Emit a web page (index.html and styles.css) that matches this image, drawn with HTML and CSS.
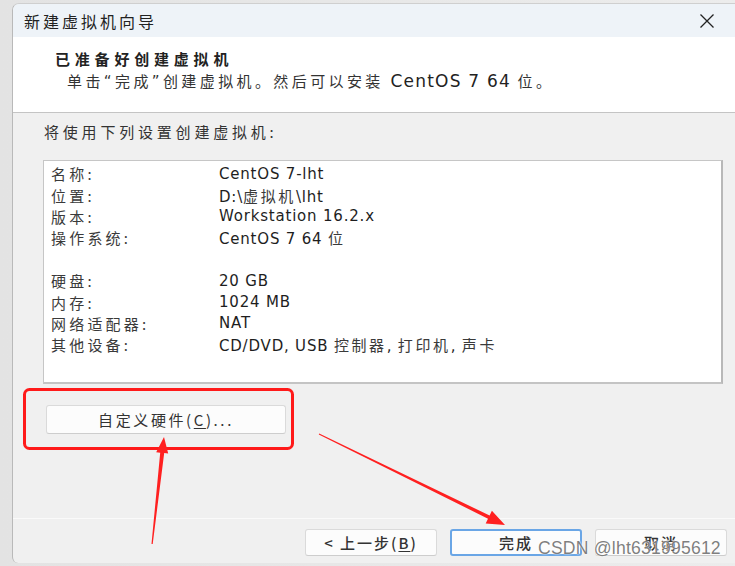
FILE: index.html
```html
<!DOCTYPE html>
<html lang="zh-CN">
<head>
<meta charset="utf-8">
<title>新建虚拟机向导</title>
<link rel="stylesheet" href="styles.css">
</head>
<body>
<div class="page">
  <div class="window">
    <div class="titlebar">
      <span class="title">新建虚拟机向导</span>
      <svg class="close" width="16" height="16" viewBox="0 0 16 16"><path d="M1.5 1.5 L14.5 14.5 M14.5 1.5 L1.5 14.5" stroke="#222" stroke-width="1.3" fill="none"/></svg>
    </div>
    <div class="header">
      <div class="heading">已准备好创建虚拟机</div>
      <div class="subtitle">单击<span class="q">“</span>完成<span class="q">”</span>创建虚拟机。然后可以安装 <span class="latin">CentOS 7 64 </span>位。</div>
    </div>
    <div class="body">
      <div class="intro">将使用下列设置创建虚拟机:</div>
      <div class="box">
        <div class="row"><span class="k">名称:</span><span class="v">CentOS 7-lht</span></div>
        <div class="row"><span class="k">位置:</span><span class="v">D:\<span class="cjk">虚拟机</span>\lht</span></div>
        <div class="row"><span class="k">版本:</span><span class="v">Workstation 16.2.x</span></div>
        <div class="row"><span class="k">操作系统:</span><span class="v">CentOS 7 64 <span class="cjk">位</span></span></div>
        <div class="row"></div>
        <div class="row"><span class="k">硬盘:</span><span class="v">20 GB</span></div>
        <div class="row"><span class="k">内存:</span><span class="v">1024 MB</span></div>
        <div class="row"><span class="k">网络适配器:</span><span class="v">NAT</span></div>
        <div class="row"><span class="k">其他设备:</span><span class="v">CD/DVD, USB <span class="cjk">控制器</span>, <span class="cjk">打印机</span>, <span class="cjk">声卡</span></span></div>
      </div>
      <div class="custom-row">
        <div class="btn custom">自定义硬件(<u>C</u>)...</div>
      </div>
    </div>
    <div class="footer">
      <div class="btn fbtn">&lt; 上一步(<u>B</u>)</div>
      <div class="btn fbtn primary">完成</div>
      <div class="btn fbtn">取消</div>
    </div>
  </div>
  <svg class="annot" width="735" height="566" viewBox="0 0 735 566">
    <rect x="24.5" y="389.5" width="268" height="59" rx="5" ry="5" fill="none" stroke="#ff1a1a" stroke-width="3"/>
    <polygon fill="#ff2020" points="151.5,544 160.2,452.7 156.2,452.2 164,437 168.2,453.6 164.2,453.1 152.7,544.1"/>
    <polygon fill="#ff2020" points="318.8,434.4 488.0,518.7 485.7,523.4 505,525 491.9,510.8 489.6,515.5 319.2,433.6"/>
  </svg>
  <div class="watermark">CSDN @lht631995612</div>
</div>
</body>
</html>
```
FILE: styles.css
```css
html, body {
  margin: 0;
  padding: 0;
}
body {
  background: #e6e6e6;
  width: 735px;
  height: 566px;
  overflow: hidden;
}
.page {
  position: relative;
  width: 735px;
  height: 566px;
  padding: 3px 0 0 12px;
  box-sizing: border-box;
  background: linear-gradient(to right, #e3e3e3, #ececec);
}
.window {
  display: flex;
  flex-direction: column;
  height: 560px;
  width: 740px;
  background: #f0f0f0;
  border-left: 1px solid #b9b9b9;
  border-top: 1px solid #cfcfcf;
  border-radius: 7px 0 0 6px;
  overflow: hidden;
  box-sizing: border-box;
  font-family: "Noto Sans CJK SC", "DejaVu Sans", sans-serif;
  color: #333;
}
.titlebar {
  height: 33px;
  flex: none;
  display: flex;
  align-items: center;
  background: #eef3f8;
  padding-left: 11px;
  padding-right: 21px;
  box-sizing: border-box;
  width: 723px;
}
.title {
  font-size: 16px;
  letter-spacing: 3px;
  color: #222;
  line-height: 20px;
}
.close {
  margin-left: auto;
}
.header {
  flex: none;
  height: 76px;
  background: #fff;
  border-bottom: 1px solid #c4c4c4;
  box-sizing: border-box;
  padding: 12px 0 0 42px;
}
.heading {
  font-size: 15px;
  font-weight: 700;
  letter-spacing: 4.8px;
  line-height: 20px;
  color: #222;
}
.subtitle {
  margin-left: 12px;
  margin-top: 2px;
  font-size: 15px;
  letter-spacing: 3.4px;
  line-height: 20px;
  color: #333;
}
.subtitle .q, .subtitle .latin, .v {
  font-family: "DejaVu Sans", sans-serif;
}
.subtitle .latin {
  font-size: 17px;
  letter-spacing: 1.2px;
  color: #222;
}
.body {
  flex: none;
  padding: 9px 0 0 30px;
  height: 405px;
  box-sizing: border-box;
}
.intro {
  margin-left: 1px;
  font-size: 15px;
  letter-spacing: 3.8px;
  line-height: 20px;
  color: #333;
}
.box {
  margin-top: 18px;
  width: 680px;
  height: 224px;
  box-sizing: border-box;
  background: #fff;
  border: 1px solid #c6c6c6;
  border-right: 2px solid #b8b8b8;
  border-bottom: 2px solid #c4c4c4;
  padding: 2px 0 0 7px;
}
.row {
  display: flex;
  height: 21.4px;
  align-items: center;
}
.k {
  width: 168px;
  flex: none;
  font-size: 15px;
  letter-spacing: 3.2px;
  color: #3a3a3a;
}
.v {
  font-size: 15px;
  letter-spacing: 0.8px;
  color: #1e1e1e;
}
.v .cjk {
  font-family: "Noto Sans CJK SC", sans-serif;
  letter-spacing: 2.6px;
  color: #3a3a3a;
}
.custom-row {
  margin-top: 21px;
  padding-left: 3px;
}
.btn {
  display: flex;
  align-items: center;
  justify-content: center;
  box-sizing: border-box;
  background: #fcfcfc;
  border: 1px solid #dadada;
  border-bottom-color: #cdcdcd;
  border-radius: 3px;
  font-size: 15px;
  color: #333;
}
.custom {
  width: 240px;
  height: 29px;
  letter-spacing: 2.6px;
}
.btn u {
  text-decoration-thickness: 1px;
  text-underline-offset: 2px;
}
.footer {
  flex: none;
  border-top: 1px solid #fafafa;
  display: flex;
  gap: 13px;
  padding: 10px 0 0 292px;
  height: 40px;
}
.fbtn {
  width: 132px;
  height: 27px;
  letter-spacing: 2px;
  font-weight: 500;
}
.primary {
  border: 2px solid #6aa6e6;
  border-radius: 3px;
}
.annot {
  position: absolute;
  left: 0;
  top: 0;
  pointer-events: none;
}
.watermark {
  position: absolute;
  left: 538px;
  top: 537px;
  font-family: "Liberation Sans", Arial, sans-serif;
  font-size: 17.6px;
  line-height: 22px;
  color: rgba(70, 70, 70, 0.7);
  text-shadow: 0 0 1px #fff, 0 0 2px #fff;
  letter-spacing: 0.2px;
}
```
